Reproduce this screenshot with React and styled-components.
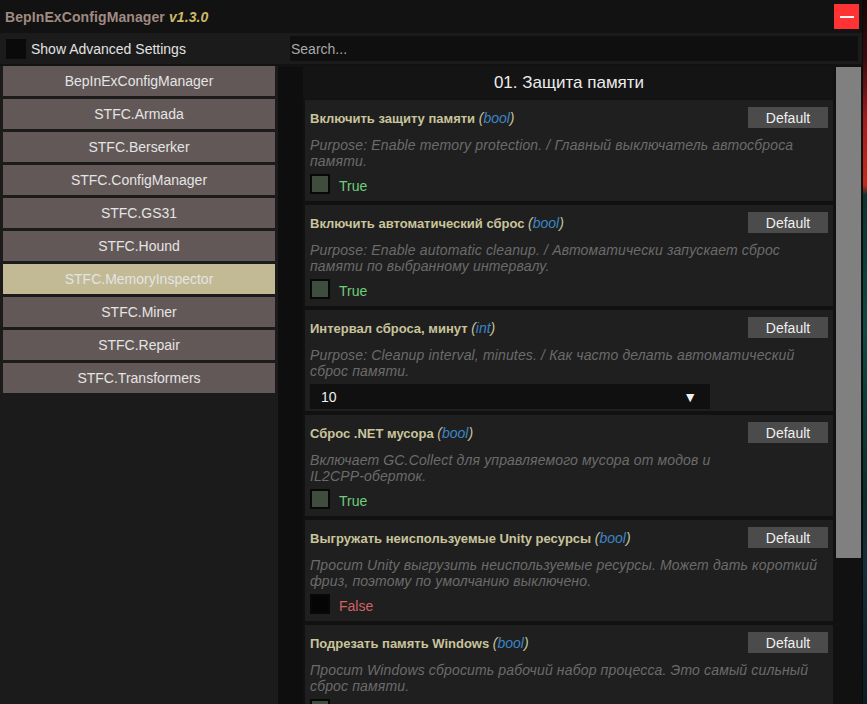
import React from 'react';
import styled, { createGlobalStyle } from 'styled-components';

const GlobalStyle = createGlobalStyle`
    html, body {
        margin: 0;
        padding: 0;
        background: #111111;
        font-family: "Liberation Sans", Arial, sans-serif;
    }
    * { box-sizing: border-box; }
`

const Screen = styled.div`
    display: flex;
    width: 867px;
    height: 704px;
    overflow: hidden;
`
const Window = styled.div`
    width: 862px;
    display: flex;
    flex-direction: column;
    background: #121212;
`
const GameStrip = styled.div`
    flex: 1;
    border-left: 1px solid #0a0a0a;
    background: linear-gradient(180deg, #150606 0px, #3a0c0e 60px, #a51b1b 120px, #c62a1c 185px, #0b3430 195px, #0f4a44 330px, #0b2e2c 500px, #12303c 560px, #0a1e22 704px);
`
const TitleBar = styled.div`
    height: 33px;
    display: flex;
    align-items: center;
    justify-content: space-between;
    padding: 0 3px 0 5px;
`
const Title = styled.div`
    font-size: 14px;
    font-weight: 700;
    color: #a08b82;
    letter-spacing: 0.1px;
`
const Version = styled.span`
    font-style: italic;
    color: #cdb968;
`
const CloseButton = styled.div`
    width: 25px;
    height: 25px;
    background: #ff3333;
    display: flex;
    align-items: center;
    justify-content: center;
    &::after {
        content: "";
        width: 14px;
        height: 2px;
        background: #f4f4f4;
    }
`
const OptionsRow = styled.div`
    height: 31px;
    display: flex;
    align-items: center;
    background: #1b1b1b;
    padding: 0 4px 0 6px;
`
const ToggleBox = styled.div`
    width: 20px;
    height: 20px;
    background: #0a0a0a;
    flex-shrink: 0;
`
const OptionLabel = styled.div`
    font-size: 14px;
    color: #e2e2e2;
    margin-left: 5px;
    width: 259px;
`
const Search = styled.div`
    flex: 1;
    height: 25px;
    background: #0f0f0f;
    display: flex;
    align-items: center;
    padding-left: 1px;
    font-size: 14px;
    color: #a8a8a8;
`
const Main = styled.div`
    flex: 1;
    display: flex;
    padding-top: 2px;
    min-height: 0;
`
const LeftPanel = styled.div`
    width: 278px;
    background: #1b1b1b;
    display: flex;
    flex-direction: column;
    gap: 3px;
    padding-left: 3px;
    padding-right: 3px;
`
const ModButton = styled.div`
    height: 30px;
    display: flex;
    align-items: center;
    justify-content: center;
    font-size: 14px;
    color: #e4e4e4;
    background: ${p => (p.$active ? '#c2b995' : '#635858')};
`
const Gutter = styled.div`
    width: 25px;
    background: #0e0e0e;
    margin-top: 1px;
`
const ContentPanel = styled.div`
    flex: 1;
    display: flex;
    background: #111111;
    min-height: 0;
`
const Column = styled.div`
    width: 530px;
    display: flex;
    flex-direction: column;
    padding-left: 2px;
    min-height: 0;
`
const SectionHeader = styled.div`
    height: 33px;
    display: flex;
    align-items: center;
    justify-content: center;
    font-size: 17px;
    color: #ececec;
    background: #141414;
    margin-left: -2px;
    padding-left: 2px;
    flex-shrink: 0;
`
const Entries = styled.div`
    display: flex;
    flex-direction: column;
    gap: 4px;
    padding-top: 1px;
`
const Card = styled.div`
    height: 101px;
    flex-shrink: 0;
    background: #1f1f1f;
    padding: 7px 5px 0 5px;
    display: flex;
    flex-direction: column;
`
const CardHead = styled.div`
    height: 21px;
    display: flex;
    align-items: center;
    justify-content: space-between;
`
const EntryName = styled.div`
    font-size: 13px;
    font-weight: 700;
    color: #c9c49c;
`
const TypeTag = styled.span`
    font-style: italic;
    font-weight: 400;
    font-size: 14px;
    color: #c9c49c;
    b {
        font-weight: 400;
        color: #3d85c6;
    }
`
const DefaultButton = styled.div`
    width: 80px;
    height: 21px;
    background: #4b4b4b;
    color: #f0f0f0;
    font-size: 14px;
    display: flex;
    align-items: center;
    justify-content: center;
`
const Description = styled.div`
    margin-top: 9px;
    font-size: 14px;
    font-style: italic;
    line-height: 16px;
    letter-spacing: 0.15px;
    color: #6b6b6b;
`
const NoWrap = styled.span`
    white-space: nowrap;
`
const ValueRow = styled.div`
    margin-top: 2px;
    height: 25px;
    display: flex;
    align-items: center;
`
const Check = styled.div`
    width: 20px;
    height: 20px;
    border: 2px solid #080808;
    background: ${p => (p.$on ? '#3e4d3e' : '#050505')};
`
const CheckLabel = styled.div`
    margin-left: 9px;
    padding-top: 4px;
    font-size: 14px;
    color: ${p => (p.$on ? '#6fce7a' : '#d06262')};
`
const Dropdown = styled.div`
    width: 400px;
    height: 25px;
    margin-top: 5px;
    background: #101010;
    display: flex;
    align-items: center;
    justify-content: space-between;
    padding: 2px 13px 0 11px;
    font-size: 14px;
    color: #f0f0f0;
`
const ScrollTrack = styled.div`
    flex: 1;
    padding: 1px 1px 0 3px;
`
const ScrollThumb = styled.div`
    height: 491px;
    background: #808080;
`

const mods = [
    'BepInExConfigManager',
    'STFC.Armada',
    'STFC.Berserker',
    'STFC.ConfigManager',
    'STFC.GS31',
    'STFC.Hound',
    'STFC.MemoryInspector',
    'STFC.Miner',
    'STFC.Repair',
    'STFC.Transformers',
];

const entries = [
    {
        name: 'Включить защиту памяти',
        type: 'bool',
        desc: 'Purpose: Enable memory protection. / Главный выключатель автосброса памяти.',
        value: true,
    },
    {
        name: 'Включить автоматический сброс',
        type: 'bool',
        desc: 'Purpose: Enable automatic cleanup. / Автоматически запускает сброс памяти по выбранному интервалу.',
        value: true,
    },
    {
        name: 'Интервал сброса, минут',
        type: 'int',
        desc: 'Purpose: Cleanup interval, minutes. / Как часто делать автоматический сброс памяти.',
        value: '10',
    },
    {
        name: 'Сброс .NET мусора',
        type: 'bool',
        desc: <>Включает GC.Collect для управляемого мусора от модов и <NoWrap>IL2CPP-оберток.</NoWrap></>,
        value: true,
    },
    {
        name: 'Выгружать неиспользуемые Unity ресурсы',
        type: 'bool',
        desc: 'Просит Unity выгрузить неиспользуемые ресурсы. Может дать короткий фриз, поэтому по умолчанию выключено.',
        value: false,
    },
    {
        name: 'Подрезать память Windows',
        type: 'bool',
        desc: 'Просит Windows сбросить рабочий набор процесса. Это самый сильный сброс памяти.',
        value: true,
    },
];

const Entry = ({ entry }) => (
    <Card>
        <CardHead>
            <EntryName>
                {entry.name} <TypeTag>(<b>{entry.type}</b>)</TypeTag>
            </EntryName>
            <DefaultButton>Default</DefaultButton>
        </CardHead>
        <Description>{entry.desc}</Description>
        <ValueRow>
            {entry.type === 'int' ? (
                <Dropdown>
                    <span>{entry.value}</span>
                    <span>▼</span>
                </Dropdown>
            ) : (
                <>
                    <Check $on={entry.value} />
                    <CheckLabel $on={entry.value}>{entry.value ? 'True' : 'False'}</CheckLabel>
                </>
            )}
        </ValueRow>
    </Card>
);

const App = () => {
    return (
        <>
            <GlobalStyle />
            <Screen>
                <Window>
                    <TitleBar>
                        <Title>
                            BepInExConfigManager <Version>v1.3.0</Version>
                        </Title>
                        <CloseButton />
                    </TitleBar>
                    <OptionsRow>
                        <ToggleBox />
                        <OptionLabel>Show Advanced Settings</OptionLabel>
                        <Search>Search...</Search>
                    </OptionsRow>
                    <Main>
                        <LeftPanel>
                            {mods.map(m => (
                                <ModButton key={m} $active={m === 'STFC.MemoryInspector'}>
                                    {m}
                                </ModButton>
                            ))}
                        </LeftPanel>
                        <Gutter />
                        <ContentPanel>
                            <Column>
                                <SectionHeader>01. Защита памяти</SectionHeader>
                                <Entries>
                                    {entries.map(e => (
                                        <Entry key={e.name} entry={e} />
                                    ))}
                                </Entries>
                            </Column>
                            <ScrollTrack>
                                <ScrollThumb />
                            </ScrollTrack>
                        </ContentPanel>
                    </Main>
                </Window>
                <GameStrip />
            </Screen>
        </>
    );
};

export default App;
